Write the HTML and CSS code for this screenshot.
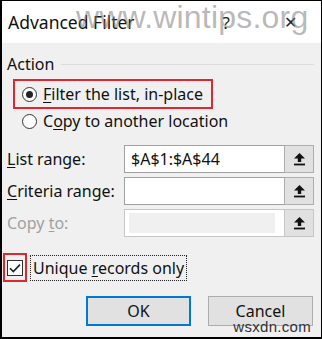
FILE: index.html
```html
<!DOCTYPE html>
<html>
<head>
<meta charset="utf-8">
<link rel="stylesheet" href="styles.css">
</head>
<body>
<div class="dialog">
  <div class="titlebar">
    <span class="title">Advanced Filter</span>
    <span class="tb-btn help">?</span>
    <span class="tb-btn close">✕</span>
    <span class="wm-top">www.wintips.org</span>
  </div>
  <div class="content">
    <div class="group-head"><span>Action</span><span class="rule"></span></div>
    <div class="radio-row hl">
      <span class="radio on"></span><span class="txt"><u>F</u>ilter the list, in-place</span>
    </div>
    <div class="radio-row">
      <span class="radio"></span><span class="txt">C<u>o</u>py to another location</span>
    </div>
    <div class="fields">
      <div class="field">
        <span class="label"><span class="txt"><u>L</u>ist range:</span></span>
        <span class="input">$A$1:$A$44</span>
        <span class="pick"><svg width="11" height="13" viewBox="0 0 11 13"><path d="M5.5 0 L11 5.5 L7.2 5.5 L7.2 9 L3.8 9 L3.8 5.5 L0 5.5 Z" fill="#111"/><rect x="0" y="10.6" width="11" height="1.8" fill="#111"/></svg></span>
      </div>
      <div class="field">
        <span class="label"><span class="txt"><u>C</u>riteria range:</span></span>
        <span class="input"></span>
        <span class="pick"><svg width="11" height="13" viewBox="0 0 11 13"><path d="M5.5 0 L11 5.5 L7.2 5.5 L7.2 9 L3.8 9 L3.8 5.5 L0 5.5 Z" fill="#111"/><rect x="0" y="10.6" width="11" height="1.8" fill="#111"/></svg></span>
      </div>
      <div class="field disabled">
        <span class="label"><span class="txt">Copy <u>t</u>o:</span></span>
        <span class="input"><span class="fill"></span></span>
        <span class="pick"><svg width="11" height="13" viewBox="0 0 11 13"><path d="M5.5 0 L11 5.5 L7.2 5.5 L7.2 9 L3.8 9 L3.8 5.5 L0 5.5 Z" fill="#111"/><rect x="0" y="10.6" width="11" height="1.8" fill="#111"/></svg></span>
      </div>
    </div>
    <div class="check-row">
      <span class="check-box-hl"><span class="check"><svg width="14" height="14" viewBox="0 0 14 14"><path d="M2 7.2 L5.3 10.5 L12 3.6" fill="none" stroke="#222" stroke-width="1.6"/></svg></span></span>
      <span class="check-label"><span class="txt">Unique <u>r</u>ecords only</span></span>
    </div>
    <div class="buttons">
      <span class="btn default">OK</span>
      <span class="btn">Cancel</span>
    </div>
  </div>
  <span class="wm-bottom">wsxdn.com</span>
</div>
</body>
</html>
```
FILE: styles.css
```css
* { box-sizing: border-box; }
html, body { margin: 0; padding: 0; background: #000; }
body { width: 322px; height: 339px; overflow: hidden; }
.dialog {
  position: relative;
  width: 322px;
  height: 339px;
  border: 1px solid #000;
  border-left-width: 2px;
  border-bottom-width: 2px;
  font-family: "Noto Sans", "Open Sans", sans-serif;
  font-size: 16px;
  color: #111;
  background: #f0f0f0;
  display: flex;
  flex-direction: column;
}
.txt { white-space: pre; }
u { text-decoration: underline; text-underline-offset: 2px; text-decoration-thickness: 1px; }
.titlebar {
  position: relative;
  height: 42px;
  background: #fff;
  display: flex;
  align-items: center;
  padding-left: 6px;
}
.title { font-size: 17.5px; flex: 1; }
.tb-btn { color: #222; font-size: 17px; }
.help { margin-right: 54px; }
.close { margin-right: 24px; font-size: 16px; }
.wm-top {
  position: absolute;
  left: 74px;
  top: -2px;
  font-family: "Liberation Sans", Arial, sans-serif;
  font-size: 32px;
  color: rgba(125,125,125,0.55);
  letter-spacing: 0.2px;
  white-space: nowrap;
}
.content {
  flex: 1;
  padding: 10px 7px 0 5px;
  display: flex;
  flex-direction: column;
}
.group-head {
  height: 22px;
  display: flex;
  align-items: center;
  gap: 7px;
}
.group-head .rule { flex: 1; height: 1px; background: #dcdcdc; }
.radio-row {
  display: flex;
  align-items: center;
  gap: 6px;
  height: 24px;
  margin-left: 6px;
  padding-left: 7px;
  border: 2px solid transparent;
  align-self: flex-start;
}
.radio-row.hl {
  margin-top: 4px;
  height: 30px;
  border-color: #e0262e;
  padding-right: 8px;
}
.radio {
  width: 15px;
  height: 15px;
  border: 1px solid #333;
  border-radius: 50%;
  background: #fff;
  display: flex;
  align-items: center;
  justify-content: center;
}
.radio.on::after {
  content: "";
  width: 7px;
  height: 7px;
  border-radius: 50%;
  background: #222;
}
.fields {
  margin-top: 12px;
  display: flex;
  flex-direction: column;
  gap: 4px;
}
.field {
  display: grid;
  grid-template-columns: 117px 1fr 30px;
  height: 28px;
  align-items: stretch;
}
.label { display: flex; align-items: center; }
.input {
  border: 1px solid #a0a0a0;
  border-right: none;
  background: #fff;
  display: flex;
  align-items: center;
  padding-left: 6px;
}
.pick {
  border: 1px solid #adadad;
  background: #e1e1e1;
  display: flex;
  align-items: center;
  justify-content: center;
}
.disabled .label { color: #a0a0a0; }
.disabled .input { border-color: #c6c6c6; padding: 3px 9px 3px 4px; align-items: stretch; }
.disabled .fill { flex: 1; background: #f0f0f0; }
.disabled .pick { border-color: #c6c6c6; }
.check-row {
  margin-top: 16px;
  display: flex;
  align-items: center;
  margin-left: -4px;
  height: 29px;
}
.check-box-hl {
  width: 24px;
  height: 29px;
  border: 2px solid #e0262e;
  display: flex;
  align-items: center;
  justify-content: center;
}
.check {
  width: 16px;
  height: 16px;
  border: 1px solid #333;
  background: #fff;
  display: flex;
  align-items: center;
  justify-content: center;
}
.check-label {
  margin-left: 3px;
  border: 1px dotted #222;
  padding: 0 2px;
  height: 26px;
  display: flex;
  align-items: center;
}
.buttons {
  margin-top: 14px;
  display: flex;
  justify-content: flex-end;
  gap: 17px;
  margin-right: 1px;
}
.btn {
  width: 105px;
  height: 30px;
  background: #e1e1e1;
  border: 1px solid #adadad;
  display: flex;
  align-items: center;
  justify-content: center;
}
.btn.default { border: 2px solid #0078d7; }
.wm-bottom {
  position: absolute;
  right: 10px;
  bottom: 2px;
  font-family: "Liberation Sans", Arial, sans-serif;
  font-size: 15px;
  color: #333;
  letter-spacing: 0.3px;
}
```
